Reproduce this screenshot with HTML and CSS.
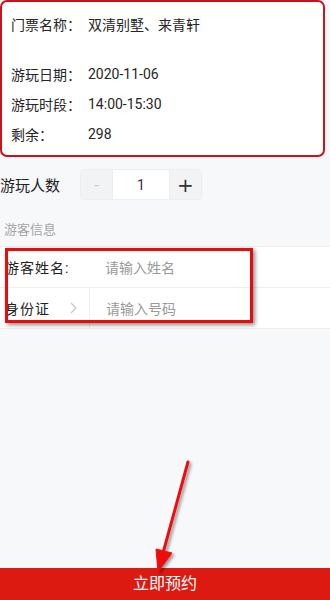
FILE: index.html
```html
<!DOCTYPE html>
<html lang="zh-CN">
<head>
    <meta charset="UTF-8">
    <meta name="viewport" content="width=device-width, initial-scale=1.0">
    <title>预约</title>
    <link rel="stylesheet" href="styles.css">
</head>
<body>
    <div id="page">
        <div class="ticket_card">
            <div class="ticket_row ticket_name">
                <span class="ticket_label">门票名称：</span>
                <span>双清别墅、来青轩</span>
            </div>
            <div class="ticket_row">
                <span class="ticket_label">游玩日期：</span>
                <span>2020-11-06</span>
            </div>
            <div class="ticket_row">
                <span class="ticket_label">游玩时段：</span>
                <span>14:00-15:30</span>
            </div>
            <div class="ticket_row">
                <span class="ticket_label">剩余：</span>
                <span>298</span>
            </div>
        </div>

        <div class="count_row">
            <span class="count_label">游玩人数</span>
            <div class="stepper">
                <button class="step_btn step_minus">-</button>
                <input class="step_input" type="text" value="1">
                <button class="step_btn step_plus">+</button>
            </div>
        </div>

        <div class="section_title">游客信息</div>

        <div class="field_group">
            <div class="field">
                <span class="field_label">游客姓名:</span>
                <span class="field_input">请输入姓名</span>
            </div>
            <div class="field">
                <span class="field_label field_select">身份证
                    <svg class="field_arrow" width="7" height="12" viewBox="0 0 7 12">
                        <polyline points="1,1 6,6 1,11" fill="none" stroke="#c4c4c4" stroke-width="1.2"/>
                    </svg>
                </span>
                <span class="field_input field_split">请输入号码</span>
            </div>
        </div>

        <div class="submit_btn">立即预约</div>

        <!-- marcações por cima -->
        <div class="mark_box"></div>
        <svg class="mark_arrow" width="330" height="600" viewBox="0 0 330 600">
            <defs>
                <filter id="shadow" x="-50%" y="-50%" width="200%" height="200%">
                    <feDropShadow dx="2" dy="2" stdDeviation="1.5" flood-color="#000" flood-opacity="0.4"/>
                </filter>
            </defs>
            <g filter="url(#shadow)" fill="#ee1111" stroke="#ee1111">
                <line x1="188" y1="462" x2="163" y2="553" stroke-width="3" stroke-linecap="round"/>
                <polygon points="158,572 156,549 172,553" stroke-width="1" stroke-linejoin="round"/>
            </g>
        </svg>
    </div>
</body>
</html>
```

FILE: styles.css
```css
* {
    box-sizing: border-box;
}

body,
html {
    padding: 0;
    margin: 0;
    font-family: Roboto, "Noto Sans CJK SC", sans-serif;
    background-color: #f7f8fa;
    color: #262626;
}

#page {
    position: relative;
    display: flex;
    flex-direction: column;
    width: 100%;
    height: 100vh;
    overflow: hidden;
}

.ticket_card {
    width: 325px;
    height: 157px;
    padding: 7px 10px 6px 9px;
    background-color: #fff;
    border: 2px solid #c9141c;
    border-radius: 7px;
    font-size: 14px;
}

.ticket_row {
    display: flex;
    height: 30px;
    align-items: center;
}

.ticket_name {
    margin-bottom: 20px;
}

.ticket_label {
    width: 77px;
}

.count_row {
    display: flex;
    align-items: center;
    margin-top: 12px;
    height: 31px;
}

.count_label {
    width: 80px;
    font-size: 15px;
    color: #222;
}

.stepper {
    display: flex;
    height: 31px;
    border: 1px solid #ebedf0;
    border-radius: 4px;
    overflow: hidden;
}

.step_btn {
    width: 31px;
    height: 100%;
    padding: 0;
    border: none;
    background-color: #f2f3f5;
    font-family: "DejaVu Sans", sans-serif;
    font-size: 20px;
    color: #323233;
}

.step_minus {
    font-family: Roboto, sans-serif;
    color: #c8c9cc;
    font-size: 17px;
}

.step_input {
    width: 58px;
    height: 100%;
    border: none;
    border-left: 1px solid #ebedf0;
    border-right: 1px solid #ebedf0;
    text-align: center;
    font-family: Roboto, sans-serif;
    font-size: 14px;
    color: #323233;
    background-color: #fff;
}

.section_title {
    margin-top: 20px;
    margin-bottom: 6px;
    padding-left: 4px;
    height: 20px;
    line-height: 20px;
    font-size: 13px;
    color: #a5a5a5;
}

.field_group {
    background-color: #fff;
    border-top: 1px solid #eeeeee;
    border-bottom: 1px solid #eeeeee;
}

.field {
    display: flex;
    height: 40px;
    align-items: stretch;
    font-size: 14px;
}

.field + .field {
    border-top: 1px solid #eeeeee;
    height: 41px;
}

.field_label {
    display: flex;
    align-items: center;
    width: 89px;
    padding-left: 5px;
    color: #222;
    letter-spacing: 1px;
}

.field_select {
    justify-content: space-between;
    padding-right: 12px;
}

.field_input {
    display: flex;
    align-items: center;
    padding-left: 16px;
    color: #9a9a9a;
}

.field_split {
    border-left: 1px solid #eeeeee;
}

.submit_btn {
    margin-top: auto;
    height: 32px;
    line-height: 32px;
    text-align: center;
    background-color: #dc1a12;
    color: #fff;
    font-size: 16px;
}

.mark_box {
    position: absolute;
    left: 5px;
    top: 248px;
    width: 248px;
    height: 75px;
    border: 3px solid #e80d0d;
    box-shadow: 2px 2px 4px rgba(0, 0, 0, 0.45);
    pointer-events: none;
}

.mark_arrow {
    position: absolute;
    left: 0;
    top: 0;
    pointer-events: none;
}
```
